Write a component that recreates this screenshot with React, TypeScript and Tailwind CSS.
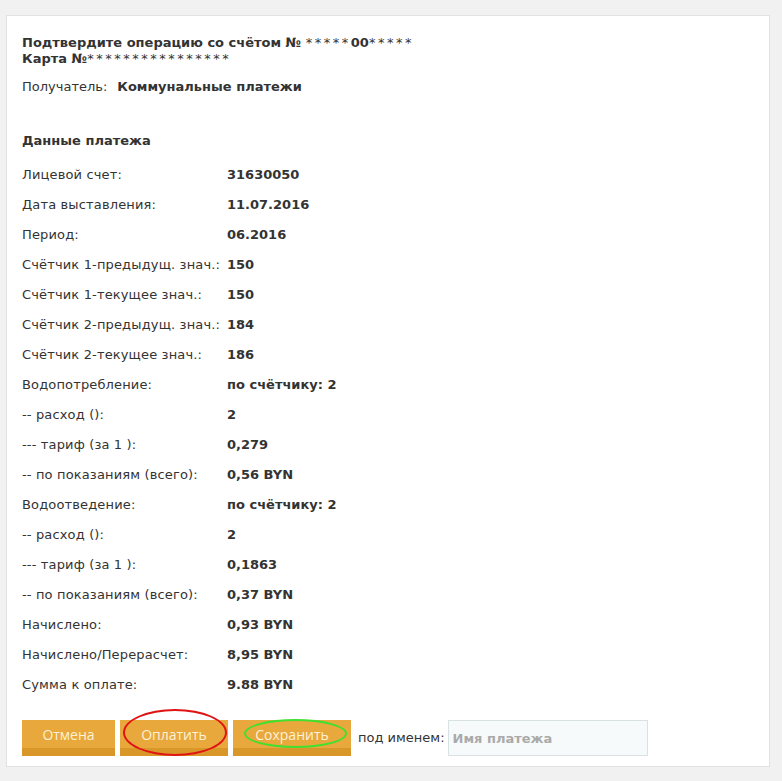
import React from "react";

const rows: [string, string][] = [
  ["Лицевой счет:", "31630050"],
  ["Дата выставления:", "11.07.2016"],
  ["Период:", "06.2016"],
  ["Счётчик 1-предыдущ. знач.:", "150"],
  ["Счётчик 1-текущее знач.:", "150"],
  ["Счётчик 2-предыдущ. знач.:", "184"],
  ["Счётчик 2-текущее знач.:", "186"],
  ["Водопотребление:", "по счётчику: 2"],
  ["-- расход ():", "2"],
  ["--- тариф (за 1 ):", "0,279"],
  ["-- по показаниям (всего):", "0,56 BYN"],
  ["Водоотведение:", "по счётчику: 2"],
  ["-- расход ():", "2"],
  ["--- тариф (за 1 ):", "0,1863"],
  ["-- по показаниям (всего):", "0,37 BYN"],
  ["Начислено:", "0,93 BYN"],
  ["Начислено/Перерасчет:", "8,95 BYN"],
  ["Сумма к оплате:", "9.88 BYN"],
];

const btn =
  "h-[36px] bg-[#e8a83c] border-b-[8px] border-[#d9972a] text-[#fdf1d6] text-[14px] flex items-center justify-center font-['Open_Sans',sans-serif]";

export default function App() {
  return (
    <div className="min-h-[781px] bg-[#f1f1f1] pt-[15px] pl-[6px] font-['DejaVu_Sans',Verdana,sans-serif] text-[13px] text-[#333]">
      <div className="w-[764px] bg-white border border-[#e2e2e2] pt-[19px] pl-[15px] pb-[10px]">
        <div className="leading-[16px] font-bold">
          <div>
            Подтвердите операцию со счётом №{" "}
            <span className="font-normal tracking-[2.5px]">*****</span>00
            <span className="font-normal tracking-[2.5px]">*****</span>
          </div>
          <div>
            Карта №<span className="font-normal tracking-[2.5px]">****************</span>
          </div>
        </div>
        <div className="mt-[12px] leading-[16px] flex">
          <span>Получатель:</span>
          <span className="ml-[10px] font-bold">Коммунальные платежи</span>
        </div>
        <div className="mt-[38px] leading-[16px] font-bold">Данные платежа</div>
        <div className="mt-[11px]">
          {rows.map(([l, v], i) => (
            <div key={i} className="h-[30px] flex items-center">
              <div className="w-[205px] tracking-[0.15px]">{l}</div>
              <div className="font-bold">{v}</div>
            </div>
          ))}
        </div>
        <div className="mt-[20px] flex items-center">
          <div className={`${btn} w-[93px]`}>Отмена</div>
          <div className="relative ml-[5px]">
            <div className={`${btn} w-[108px]`}>Оплатить</div>
            <div className="absolute left-[3px] top-[-11px] w-[104px] h-[47px] rounded-[50%] border-2 border-[#e01414]" />
          </div>
          <div className="relative ml-[5px]">
            <div className={`${btn} w-[118px]`}>Сохранить</div>
            <div className="absolute left-[11px] top-[-1px] w-[103px] h-[29px] rounded-[50%] border-2 border-[#3fe02f]" />
          </div>
          <span className="ml-[7px] mr-[3px]">под именем:</span>
          <input
            className="w-[200px] h-[36px] bg-[#f7fafa] border border-[#d8e2e2] px-[4px] font-bold text-[13px] placeholder:text-[#aaa] outline-none"
            placeholder="Имя платежа"
          />
        </div>
      </div>
    </div>
  );
}
